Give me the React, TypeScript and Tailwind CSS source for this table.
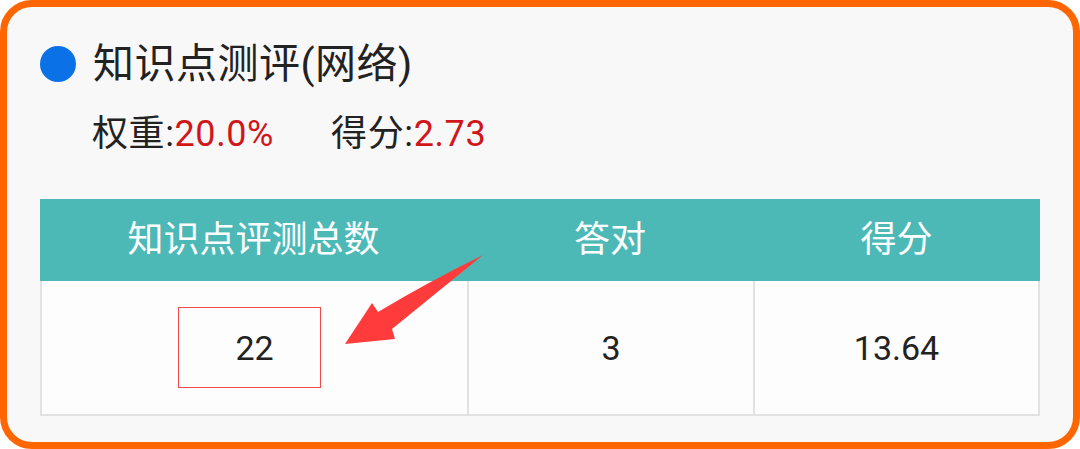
const columns = [
  { title: "知识点评测总数", value: "22" },
  { title: "答对", value: "3" },
  { title: "得分", value: "13.64" },
];

export default function App() {
  return (
    <div
      className="relative h-[449px] w-[1080px] bg-white"
      style={{ fontFamily: '"Roboto", "Noto Sans CJK SC", sans-serif' }}
    >
      <div className="flex h-full flex-col rounded-[32px] border-[7px] border-[#ff6600] bg-[#f8f8f8] px-[33px] pt-[30px]">
        <div className="flex h-[54px] items-center gap-[17px]">
          <span className="h-[36px] w-[36px] rounded-full bg-[#0a72e6]" />
          <h1 className="text-[41px] leading-none font-normal tracking-[0.5px] text-[#222]">知识点测评(网络)</h1>
        </div>

        <div className="mt-[23px] flex h-[40px] items-center pl-[52px] text-[36px] leading-none tracking-[0.6px] text-[#222]">
          <span>
            权重:<span className="text-[#d0161b]">20.0%</span>
          </span>
          <span className="ml-[57px]">
            得分:<span className="text-[#d0161b]">2.73</span>
          </span>
        </div>

        <div className="mt-[45px] w-[1000px]">
          <div className="grid h-[82px] grid-cols-[427px_286px_1fr] bg-[#4db9b7] text-white">
            {columns.map((col) => (
              <div key={col.title} className="flex items-center justify-center text-[36px] leading-none">
                {col.title}
              </div>
            ))}
          </div>
          <div className="grid h-[135px] grid-cols-[427px_286px_1fr] border-x-2 border-b-2 border-[#e2e2e2] bg-[#fdfdfd]">
            {columns.map((col, i) => (
              <div
                key={col.title}
                className={`flex items-center justify-center text-[34px] leading-none text-[#222] ${
                  i < 2 ? "border-r-2 border-[#e2e2e2]" : ""
                }`}
              >
                {col.value}
              </div>
            ))}
          </div>
        </div>
      </div>

      {/* annotation: box round the count and the pointing arrow */}
      <div className="absolute left-[178px] top-[307px] h-[81px] w-[143px] border border-[#f04a4a]" />
      <svg className="absolute inset-0" width="1080" height="449" viewBox="0 0 1080 449">
        <path
          d="M483,255 Q428,282 378,312 L372,303 L345,344 L395,339 L392,329 Q440,290 483,255 Z"
          fill="#ff3b3b"
        />
      </svg>
    </div>
  );
}
